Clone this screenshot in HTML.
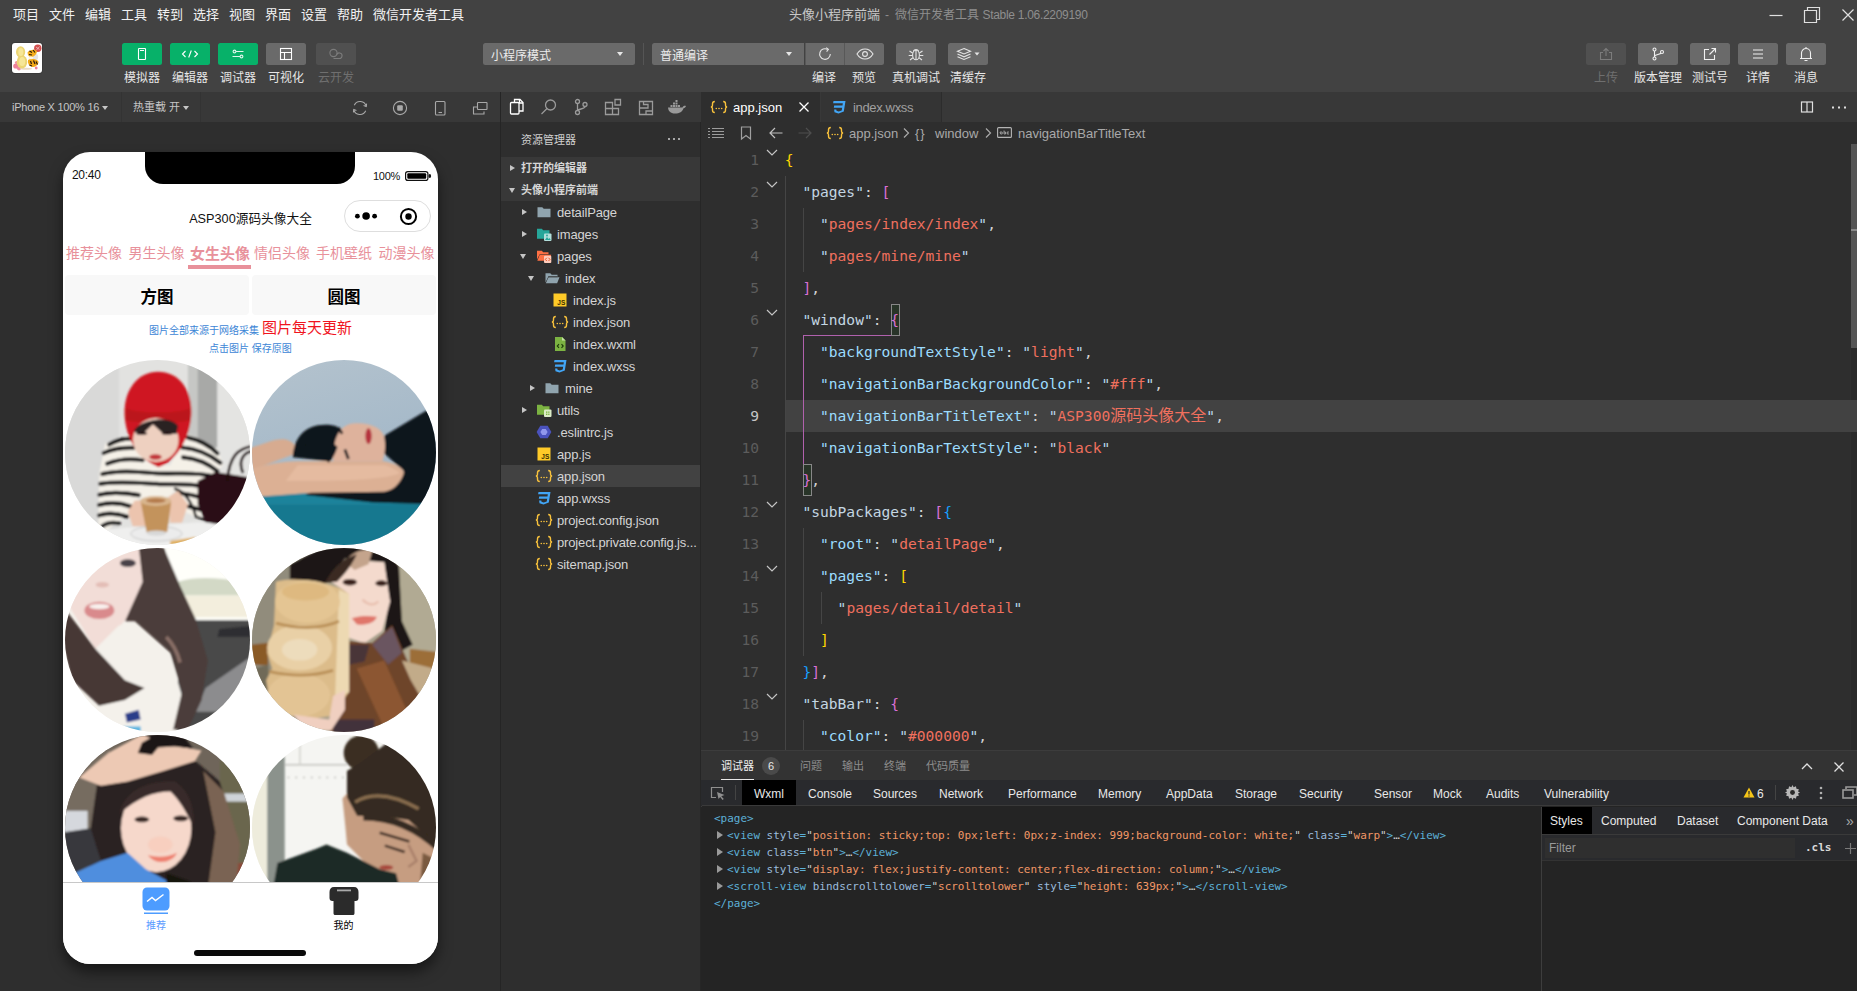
<!DOCTYPE html>
<html lang="zh-CN">
<head>
<meta charset="utf-8">
<title>微信开发者工具</title>
<style>
*{box-sizing:border-box;margin:0;padding:0}
html,body{width:1857px;height:991px;overflow:hidden;background:#2e2e2e}
body{position:relative;font-family:"Liberation Sans","Noto Sans CJK SC",sans-serif;color:#ddd;font-size:12px;-webkit-font-smoothing:antialiased}
.abs{position:absolute}
svg{display:block;overflow:visible}
/* ---------- top bars ---------- */
#menubar{left:0;top:0;width:1857px;height:30px;background:#424242}
#menubar .mi{position:absolute;top:0;height:30px;line-height:29px;font-size:13px;color:#f2f2f2;white-space:nowrap}
#title{position:absolute;left:789px;top:0;height:30px;line-height:30px;font-size:12px;color:#c8c8c8;white-space:nowrap}
#title span{color:#8e8e8e}
#toolbar{left:0;top:30px;width:1857px;height:62px;background:#424242}
.tb{position:absolute;top:13px;width:40px;height:22px;border-radius:2.5px;background:#6a6a6a}
.tb.g{background:#07b169}
.tb.d{background:#505050}
.tb svg{position:absolute;left:50%;top:50%;transform:translate(-50%,-50%)}
.tl{position:absolute;top:39px;height:18px;line-height:18px;font-size:12px;color:#e6e6e6;white-space:nowrap;transform:translateX(-50%)}
.tl.d{color:#6f6f6f}
.sel{position:absolute;top:13px;height:22px;border-radius:2.5px;background:#6a6a6a;color:#ececec;font-size:12px;line-height:26px;padding-left:8px;white-space:nowrap}
.sel i{position:absolute;right:12px;top:9px;border:3px solid transparent;border-top:4px solid #e6e6e6;border-bottom:none;width:0;height:0}
/* ---------- sub bars ---------- */
#simbar{left:0;top:92px;width:500px;height:30px;background:#383838}
#actbar{left:501px;top:92px;width:200px;height:30px;background:#383838}
#vsplit{left:500px;top:92px;width:1px;height:899px;background:#252525}
#simbg{left:0;top:122px;width:500px;height:869px;background:#2e2e2e}

#simbar .t{position:absolute;top:0;height:30px;line-height:30px;font-size:11px;color:#c6c6c6;white-space:nowrap}
#simbar .sep{position:absolute;top:0;width:1px;height:30px;background:#333}
.caret{display:inline-block;border:3px solid transparent;border-top:4px solid #c6c6c6;border-bottom:none;margin-left:3px;vertical-align:1px}
/* explorer */
#explorer{left:501px;top:122px;width:199px;height:869px;background:#2e2e2e;overflow:hidden}
#explorer .hd{position:absolute;left:20px;top:9px;font-size:11px;line-height:18px;color:#d0d0d0}
.sec{position:absolute;left:0;width:199px;height:22px;background:#383838;font-size:11px;font-weight:bold;color:#d6d6d6;line-height:22px;padding-left:20px}
.sec:before{content:"";position:absolute;left:8px;top:8px;border:3.500px solid transparent}
.sec.c:before{border-left:5px solid #c5c5c5;border-right:none;left:9px;top:7.500px}
.sec.o:before{border-top:5px solid #c5c5c5;border-bottom:none;top:9px}
.row{position:absolute;left:0;width:199px;height:22px;line-height:22px;font-size:13px;color:#d4d4d4;white-space:nowrap}
.row.selr{background:#424242}
.row .ar{position:absolute;top:7.500px;border:3.500px solid transparent}
.row .ar.c{border-left:5px solid #c5c5c5;border-right:none}
.row .ar.o{border-top:5px solid #c5c5c5;border-bottom:none;top:9px;margin-left:-2px}
.row .ic{position:absolute;top:3px;width:16px;height:16px}
.row .nm{position:absolute;top:1px;letter-spacing:-.150px}

/* editor */
#edtabs{left:702px;top:92px;width:1155px;height:30px;background:#383838}
#edgap{left:700px;top:122px;width:1px;height:869px;background:#262626}
.etab{position:absolute;top:0;height:30px;line-height:31px;font-size:13px;white-space:nowrap}
#crumbs{left:702px;top:122px;width:1155px;height:22px;background:#2e2e2e;font-size:13px;color:#a9a9a9;line-height:23.500px;white-space:nowrap}
#crumbs span{position:absolute;top:0}
#code{left:702px;top:144px;width:1155px;height:606px;background:#2e2e2e;overflow:hidden}
.ln{position:absolute;left:0;width:57px;height:32px;line-height:32px;text-align:right;font-family:"DejaVu Sans Mono","Liberation Mono",monospace;font-size:14.600px;color:#5c5c5c}
.cl{position:absolute;left:82.800px;height:32px;line-height:32px;font-family:"DejaVu Sans Mono","Liberation Mono","Noto Sans CJK SC",monospace;font-size:14.600px;color:#d4d4d4;white-space:pre;letter-spacing:.010px}
.k1{color:#c4d6e2}.k2{color:#9cdcfe}.q{color:#b9d7ea}.s{color:#f0705e}
.b1{color:#ffd700}.b2{color:#da70d6}.b3{color:#179fff}
.fold{position:absolute;left:63px;width:14px;height:8px}
.guide{position:absolute;width:1px;background:#454545}

/* debugger */
#dbg{left:702px;top:750px;width:1155px;height:241px;background:#242424}
#dbghd{position:absolute;left:0;top:0;width:1155px;height:30px;background:#333;border-top:1px solid #3c3c3c}
#dbghd .t{position:absolute;top:5px;height:20px;line-height:20px;font-size:11px;color:#8c8c8c;white-space:nowrap}
#dvtabs{position:absolute;left:0;top:30px;width:1155px;height:26px;background:#292a2d;border-bottom:1px solid #3a3a3a}
#dvtabs .t{position:absolute;top:1.500px;height:25px;line-height:25px;font-size:12px;color:#e8e8e8;white-space:nowrap}
.el{position:absolute;height:17px;line-height:17px;font-family:"DejaVu Sans Mono","Liberation Mono",monospace;font-size:10.960px;white-space:pre;color:#5db0d7}
.el .a{color:#9bbbdc}.el .v{color:#f29766}.el .p{color:#5db0d7}.el .g{color:#d0d0d0}
.el i{position:absolute;left:-10.500px;top:3.500px;border:4.200px solid transparent;border-left:6.500px solid #9a9a9a;border-right:none}
#styles{position:absolute;left:839px;top:57px;width:316px;height:184px;border-left:1px solid #3d3d3d;background:#242424}
#styles .t{position:absolute;top:1px;height:27px;line-height:27px;font-size:12px;color:#e8e8e8;white-space:nowrap}

/* phone */
#phone{left:63px;top:152px;width:375px;height:812px;background:#fff;border-radius:27px;overflow:hidden;box-shadow:0 8px 14px rgba(0,0,0,.5);color:#000}
#phone .ab{position:absolute;white-space:nowrap}
.ptab{position:absolute;top:90px;height:22px;line-height:22px;font-size:14px;color:#e8919b;white-space:nowrap}
.pbtn{position:absolute;top:123px;height:40px;background:#f8f8f8;border-radius:4px;text-align:center;line-height:44.500px;font-size:16.500px;font-weight:bold;color:#000}
.ph{position:absolute;width:184.500px;height:184.500px;border-radius:50%;overflow:hidden}
.ph svg{width:184.500px;height:184.500px}
</style>
</head>
<body>
<!-- MENUBAR -->
<div id="menubar" class="abs">
<div class="mi" style="left:13px">项目</div>
<div class="mi" style="left:49px">文件</div>
<div class="mi" style="left:85px">编辑</div>
<div class="mi" style="left:121px">工具</div>
<div class="mi" style="left:157px">转到</div>
<div class="mi" style="left:193px">选择</div>
<div class="mi" style="left:229px">视图</div>
<div class="mi" style="left:265px">界面</div>
<div class="mi" style="left:301px">设置</div>
<div class="mi" style="left:337px">帮助</div>
<div class="mi" style="left:373px">微信开发者工具</div>
<div id="title"><b style="font-weight:normal;font-size:13px">头像小程序前端</b><span style="position:absolute;left:96px">-</span><span style="position:absolute;left:106px">微信开发者工具</span><span style="position:absolute;left:193.500px;letter-spacing:-.300px">Stable 1.06.2209190</span></div>
<svg class="abs" style="left:1764px;top:0" width="93" height="30" viewBox="0 0 93 30" fill="none" stroke="#e0e0e0" stroke-width="1.2">
<path d="M5.5 15.5h13"/>
<path d="M40.5 10.5h12v12h-12z M43.5 10.5v-3h12v12h-3"/>
<path d="M78.5 9.5l11 11M89.5 9.5l-11 11"/>
</svg>
</div>
<!-- TOOLBAR -->
<div id="toolbar" class="abs">
<!-- avatar -->
<div class="abs" style="left:12px;top:13px;width:30px;height:30px;border-radius:3px;background:#fff;overflow:hidden;box-shadow:0 0 0 1px #3a3a3a">
<svg width="30" height="30" viewBox="0 0 30 30"><defs><filter id="av" x="-10%" y="-10%" width="120%" height="120%"><feGaussianBlur stdDeviation=".35"/></filter></defs><g filter="url(#av)">
<circle cx="3.800" cy="23" r="2.600" fill="#ee8098"/><circle cx="7" cy="25.300" r="2.100" fill="#f08aa0"/><circle cx="4.500" cy="19.500" r="1.600" fill="#f2909c"/><circle cx="24.200" cy="25" r="1.400" fill="#ee8098"/>
<ellipse cx="14" cy="25.800" rx="6" ry="1" fill="#ead9c4"/>
<ellipse cx="8.600" cy="9" rx="4.600" ry="5.800" fill="#ecd573"/><ellipse cx="10" cy="18.800" rx="5.300" ry="6.600" fill="#ecd573"/>
<ellipse cx="8.800" cy="9" rx="2.500" ry="4" fill="#f6e697"/><ellipse cx="10.200" cy="18.500" rx="3" ry="4.500" fill="#f6e697"/>
<circle cx="25.800" cy="5.200" r="3.700" fill="#d24f4f"/><path d="M24 4l3.500 2.500M27.500 3.500L24.500 7" stroke="#f6d0d0" stroke-width=".7"/>
<ellipse cx="23" cy="14" rx="3.200" ry="3.400" fill="#e4e4e4"/>
<path d="M15.500 9.500c2-3 7-3.500 9.500-1.500 0 3-2.500 5.500-6 6.500-2-.5-3.500-2.500-3.500-5z" fill="#f4ad1c"/>
<path d="M16 17c3-2 8-1.500 10.500 1.500 0 3.500-3 5.500-6.500 5.500-3-1-4.500-3.500-4-7z" fill="#f2a818"/>
<path d="M17.500 8l2.500 1.500M21 7l2 2.500M17 11.500l3 .5M18.500 18l1 3M21.500 17.500l1.500 3.500M24 18.500l1.500 3M17.500 22l2.500 1" stroke="#2a1a08" stroke-width="1.200"/>
<ellipse cx="18.800" cy="14.800" rx="2.500" ry="1.500" fill="#fdf5e4"/>
</g></svg></div>
<!-- left buttons -->
<div class="tb g" style="left:122px"><svg width="14" height="14" viewBox="0 0 14 14" fill="none" stroke="#fff" stroke-width="1.1"><rect x="3.5" y="1.5" width="7" height="11" rx=".6"/><path d="M5 3.5h4" stroke-width="1"/></svg></div>
<div class="tb g" style="left:170px"><svg width="18" height="12" viewBox="0 0 18 12" fill="none" stroke="#fff" stroke-width="1.1"><path d="M4.5 3L1.5 6l3 3M13.5 3l3 3-3 3M10.3 2.5L7.7 9.5"/></svg></div>
<div class="tb g" style="left:218px"><svg width="14" height="12" viewBox="0 0 14 12" fill="none" stroke="#dff7ec" stroke-width="1.1"><circle cx="3.5" cy="3.5" r="1.4"/><path d="M5 3.5h7.5M1.5 8.5h7.5"/><circle cx="10.5" cy="8.5" r="1.4"/></svg></div>
<div class="tb" style="left:266px"><svg width="14" height="14" viewBox="0 0 14 14" fill="none" stroke="#fff" stroke-width="1.1"><rect x="1.5" y="1.5" width="11" height="11"/><path d="M1.5 5.5h11M5.5 5.5v7"/></svg></div>
<div class="tb d" style="left:316px"><svg width="16" height="12" viewBox="0 0 16 12" fill="none" stroke="#7c7c7c" stroke-width="1.1"><circle cx="5.5" cy="5" r="3.6"/><path d="M8.5 7.2a2.8 2.8 0 1 1 2.3 3.3H5.5"/></svg></div>
<div class="tl" style="left:142px">模拟器</div>
<div class="tl" style="left:190px">编辑器</div>
<div class="tl" style="left:238px">调试器</div>
<div class="tl" style="left:286px">可视化</div>
<div class="tl d" style="left:336px">云开发</div>
<!-- middle -->
<div class="sel" style="left:483px;width:152px">小程序模式<i></i></div>
<div class="abs" style="left:643px;top:13px;width:1px;height:22px;background:#555"></div>
<div class="sel" style="left:652px;width:152px;border-radius:2.5px 0 0 2.5px">普通编译<i></i></div>
<div class="tb" style="left:804.5px;width:39.5px;border-radius:0;border-left:1px solid #585858"><svg width="14" height="14" viewBox="0 0 14 14" fill="none" stroke="#e4e4e4" stroke-width="1.1"><path d="M12.3 7A5.3 5.3 0 1 1 9.6 2.4"/><path d="M8.2 .6l2.2 1.8-1.8 2.3" /></svg></div>
<div class="tb" style="left:844px;width:40px;border-radius:0 2.5px 2.5px 0;border-left:1px solid #585858"><svg width="18" height="12" viewBox="0 0 18 12" fill="none" stroke="#e4e4e4" stroke-width="1.1"><path d="M1 6c2-3.3 4.8-5 8-5s6 1.700 8 5c-2 3.300-4.800 5-8 5s-6-1.700-8-5z"/><circle cx="9" cy="6" r="2.400"/></svg></div>
<div class="tb" style="left:896px"><svg width="18" height="14" viewBox="0 0 18 14" fill="none" stroke="#e4e4e4" stroke-width="1.1"><ellipse cx="9" cy="8" rx="3.4" ry="4.8"/><path d="M9 3.300v9.500M6.300 4.200A3 3 0 0 1 11.700 4.200M5.600 6L2.500 4M5.600 8.500H1.700M5.900 10.800L3 13M12.400 6l3.100-2M12.400 8.500h3.900M12.100 10.800L15 13"/></svg></div>
<div class="tb" style="left:948px"><svg width="24" height="14" viewBox="0 0 24 14" fill="none" stroke="#e4e4e4" stroke-width="1.1"><path d="M8 1.500l6.500 2.700L8 7 1.500 4.200z"/><path d="M1.500 7L8 9.800 14.500 7M1.500 9.700L8 12.500l6.500-2.800"/><path d="M18.500 5.500h5l-2.500 3z" fill="#e4e4e4" stroke="none"/></svg></div>
<div class="tl" style="left:824px">编译</div>
<div class="tl" style="left:864px">预览</div>
<div class="tl" style="left:916px">真机调试</div>
<div class="tl" style="left:968px">清缓存</div>
<!-- right -->
<div class="tb d" style="left:1586px"><svg width="14" height="14" viewBox="0 0 14 14" fill="none" stroke="#7c7c7c" stroke-width="1.1"><path d="M4 5.500H1.500v7h11v-7H10M7 9V1.500M4.500 4L7 1.500 9.500 4"/></svg></div>
<div class="tb" style="left:1638px"><svg width="14" height="14" viewBox="0 0 14 14" fill="none" stroke="#f0f0f0" stroke-width="1.1"><circle cx="3.500" cy="2.500" r="1.500"/><circle cx="3.500" cy="11.500" r="1.500"/><circle cx="11" cy="5" r="1.500"/><path d="M3.500 4v6M3.500 9.500c0-2.500 6-1.500 6.500-3.500"/></svg></div>
<div class="tb" style="left:1690px"><svg width="14" height="14" viewBox="0 0 14 14" fill="none" stroke="#f0f0f0" stroke-width="1.1"><path d="M6 2.500H1.500v10h10V8M8.500 1.500h4v4M12.500 1.500L6.500 7.500"/></svg></div>
<div class="tb" style="left:1738px"><svg width="12" height="12" viewBox="0 0 12 12" fill="none" stroke="#f0f0f0" stroke-width="1.1"><path d="M1 2h10M1 6h10M1 10h10"/></svg></div>
<div class="tb" style="left:1786px"><svg width="14" height="16" viewBox="0 0 14 16" fill="none" stroke="#f0f0f0" stroke-width="1.1"><path d="M2.500 12.500V7a4.500 4.500 0 0 1 9 0v5.500M1 12.500h12M7 1v1.500M5.500 14.500h3"/></svg></div>
<div class="tl d" style="left:1606px">上传</div>
<div class="tl" style="left:1658px">版本管理</div>
<div class="tl" style="left:1710px">测试号</div>
<div class="tl" style="left:1758px">详情</div>
<div class="tl" style="left:1806px">消息</div>
</div>
<!--SIM-->
<div id="simbar" class="abs">
<div class="t" style="left:12px;letter-spacing:-.250px">iPhone X 100% 16<span class="caret"></span></div>
<div class="sep" style="left:121px"></div>
<div class="t" style="left:133px">热重载 开<span class="caret"></span></div>
<div class="sep" style="left:200px"></div>
<svg class="abs" style="left:352px;top:7px" width="16" height="18" viewBox="0 0 16 18" fill="none" stroke="#a8a8a8" stroke-width="1.100"><path d="M2.300 6.200A6.300 6.300 0 0 1 14.200 7.400M13.700 11.800A6.300 6.300 0 0 1 1.800 10.600"/><path d="M14.600 4.600l-.4 2.900-2.600-.9M1.400 13.400l.4-2.900 2.600.9" /></svg>
<svg class="abs" style="left:392px;top:8px" width="16" height="16" viewBox="0 0 16 16" fill="none" stroke="#a8a8a8" stroke-width="1.1"><circle cx="8" cy="8" r="6.600"/><rect x="5.200" y="5.200" width="5.600" height="5.600" rx="1" fill="#a8a8a8" stroke="none"/></svg>
<svg class="abs" style="left:432px;top:8px" width="16" height="16" viewBox="0 0 16 16" fill="none" stroke="#a8a8a8" stroke-width="1.1"><rect x="3.500" y="1.500" width="9.500" height="13.500" rx="1"/><path d="M6.500 12.500h3.500"/></svg>
<svg class="abs" style="left:472px;top:8px" width="16" height="16" viewBox="0 0 16 16" fill="none" stroke="#a8a8a8" stroke-width="1.100"><rect x="5.500" y="2.500" width="9.500" height="7" rx=".6"/><path d="M5.500 7h-4v7h10.500v-2.500" /></svg>
</div>
<div id="simbg" class="abs"></div>
<div id="actbar" class="abs">
<svg class="abs" style="left:7px;top:6px" width="18" height="18" viewBox="0 0 18 18" fill="none" stroke="#fff" stroke-width="1.300"><path d="M6.500 4.500v-3h5.500l3 3v8.500h-4"/><path d="M11.500 1.500v3.500h3.500"/><rect x="2.500" y="4.500" width="8.500" height="11.500" rx="1"/></svg>
<svg class="abs" style="left:39px;top:6px" width="18" height="18" viewBox="0 0 18 18" fill="none" stroke="#9a9a9a" stroke-width="1.300"><circle cx="10.500" cy="7" r="5"/><path d="M7 10.500L1.500 16"/></svg>
<svg class="abs" style="left:71px;top:6px" width="18" height="18" viewBox="0 0 18 18" fill="none" stroke="#9a9a9a" stroke-width="1.300"><circle cx="5.500" cy="3.500" r="2"/><circle cx="5.500" cy="14.500" r="2"/><circle cx="13" cy="6.500" r="2"/><path d="M5.500 5.500v7M13 8.500c0 3-7.500 2-7.500 4.500"/></svg>
<svg class="abs" style="left:103px;top:6px" width="18" height="18" viewBox="0 0 18 18" fill="none" stroke="#9a9a9a" stroke-width="1.300"><path d="M1.500 4.500h7v12h-7zM1.500 10.500h13v6h-6v-12M11 1.500h5.500v5.500H11z"/></svg>
<svg class="abs" style="left:136px;top:6px" width="18" height="18" viewBox="0 0 18 18" fill="none" stroke="#9a9a9a" stroke-width="1.300"><path d="M2.500 3.500h13v13h-13zM2.500 10h8.500v-3.500H6.500v-3M9 16.500v-3.500h6.500"/></svg>
<svg class="abs" style="left:166px;top:6px" width="20" height="18" viewBox="0 0 20 18"><path d="M1 9.500h14.500c.5-1.500 2-2 3.500-1.500-.3 1.300-1.300 2-2.500 2.200C15.500 13.500 12.500 15.500 8 15.500 3.500 15.500 1.300 13 1 9.500z" fill="#9a9a9a"/><path d="M3.500 7h2v2h-2zM6 7h2v2h-2zM8.500 7h2v2h-2zM6 4.500h2v2h-2zM8.500 4.500h2v2h-2zM11 7h2v2h-2zM8.500 2h2v2h-2z" fill="#9a9a9a"/></svg>
</div>
<div id="vsplit" class="abs"></div>
<div id="phone" class="abs">
<div class="ab" style="left:9px;top:15px;font-size:12px;line-height:16px;color:#111;letter-spacing:-.300px">20:40</div>
<div class="abs" style="left:82px;top:0;width:210px;height:32px;background:#000;border-radius:0 0 18px 18px"></div>
<div class="ab" style="left:310px;top:16px;font-size:11px;line-height:16px;color:#111;letter-spacing:-.300px">100%</div>
<svg class="abs" style="left:342px;top:19px" width="27" height="10" viewBox="0 0 27 10"><rect x=".6" y=".6" width="22.300" height="8.800" rx="2.200" fill="none" stroke="#111" stroke-width="1.200"/><rect x="2.300" y="2.300" width="18.900" height="5.400" rx="1" fill="#000"/><ellipse cx="24.800" cy="5" rx="1.300" ry="1.900" fill="#111"/></svg>
<div class="ab" style="left:0;width:375px;top:57px;text-align:center;font-size:12.700px;line-height:20px;color:#111">ASP300源码头像大全</div>
<div class="abs" style="left:281px;top:48px;width:87px;height:32px;border:1px solid #dedede;border-radius:16px;background:#fff"></div>
<svg class="abs" style="left:292px;top:59px" width="24" height="10" viewBox="0 0 24 10" fill="#000"><circle cx="2.400" cy="5.200" r="2.400"/><circle cx="11.100" cy="5" r="3.800"/><circle cx="19.600" cy="5.200" r="2.400"/></svg>
<svg class="abs" style="left:337px;top:56px" width="17" height="17" viewBox="0 0 17 17"><circle cx="8.500" cy="8.500" r="7.600" fill="none" stroke="#000" stroke-width="2"/><circle cx="8.500" cy="8.500" r="3.200" fill="#000"/></svg>
<div class="ptab" style="left:3px">推荐头像</div>
<div class="ptab" style="left:65.5px">男生头像</div>
<div class="ptab" style="left:191px">情侣头像</div>
<div class="ptab" style="left:253px">手机壁纸</div>
<div class="ptab" style="left:315.5px">动漫头像</div>
<div class="ptab" style="left:127px;font-size:15px;font-weight:bold;top:90.500px">女生头像</div>
<div class="abs" style="left:125px;top:113px;width:63px;height:4px;background:#e8919b"></div>

<div class="pbtn" style="left:2px;width:184px">方图</div>
<div class="pbtn" style="left:189px;width:184px">圆图</div>
<div class="ab" style="left:86px;top:171.500px;font-size:10px;line-height:14px;color:#3d86d6">图片全部来源于网络采集</div>
<div class="ab" style="left:199px;top:166px;font-size:15px;line-height:20px;color:#f0141e">图片每天更新</div>
<div class="ab" style="left:146px;top:190px;font-size:10px;line-height:14px;color:#3d86d6">点击图片 保存原图</div>
<div class="ph" style="left:2px;top:208px"><svg viewBox="25.4 25.4 937.6 937.6"><defs><filter id="bl1" x="-5%" y="-5%" width="110%" height="110%"><feGaussianBlur stdDeviation="5"/></filter></defs><rect x="-24.6" y="-24.6" width="1037.6" height="1037.6" fill="#e2e2e0"/><g filter="url(#bl1)"><rect x="-30" y="-30" width="330" height="1050" fill="#d9d9d8"/><rect x="650" y="-30" width="60" height="500" fill="#c6c7c5"/><rect x="700" y="-30" width="100" height="500" fill="#a8a9a7"/><rect x="800" y="-30" width="220" height="700" fill="#e4e4e2"/><path d="M25 1000V900L240 885 700 850 1000 870v130z" fill="#efefee"/><path d="M195 890L200 600 230 450 340 410 420 420 470 560H560L640 400 700 420 800 480 830 560 760 620 700 700 720 835 640 800 580 690 560 720 400 730 350 800 240 890z" fill="#f5f1e8"/><g stroke="#151213" stroke-width="21" fill="none" stroke-linecap="round"><path d="M250 455C290 430 330 425 360 425M650 420C700 430 760 460 800 500"/><path d="M222 498C270 475 320 470 372 472M620 470C690 475 760 505 815 548"/><path d="M240 552C300 528 360 525 420 535M625 520C690 525 750 550 800 590"/><path d="M215 605C290 585 380 590 470 600S680 590 770 615"/><path d="M205 655C290 640 400 650 490 655S660 650 720 668"/><path d="M200 710C260 695 330 700 400 712M600 700C640 706 680 712 700 720"/><path d="M198 762C250 748 310 752 360 770M655 770C675 775 695 780 712 786"/><path d="M198 815C240 800 290 805 340 820"/><path d="M215 870C240 850 270 850 300 855"/><path d="M585 680C650 700 680 780 690 820L735 838" stroke-width="13"/></g><path d="M700 640L790 595 950 620 990 640V800L870 870 740 850 700 760z" fill="#2a1012"/><path d="M850 640C860 520 900 470 990 462M930 600C900 530 940 485 990 488" stroke="#1f0c0e" stroke-width="14" fill="none"/><path d="M498 85C400 85 328 170 328 290c0 110 52 230 172 280 100-30 168-170 168-280C668 170 600 85 498 85z" fill="#cf1820"/><path d="M335 270C400 300 600 300 662 270v60C600 350 400 350 333 330z" fill="#bb141c"/><ellipse cx="487" cy="432" rx="116" ry="112" fill="#eed0c0"/><path d="M375 390C390 330 560 300 600 360l-8 42-70-4-50-46-52 50z" fill="#2a2021"/><ellipse cx="415" cy="398" rx="28" ry="8" fill="#2b1c1c"/><ellipse cx="545" cy="398" rx="28" ry="8" fill="#2b1c1c"/><ellipse cx="485" cy="518" rx="32" ry="14" fill="#c2353a"/><path d="M345 795L380 740h50l15 130h-75z" fill="#ecc4ae"/><path d="M550 722L600 690l50 70-30 92h-60z" fill="#ecc4ae"/><ellipse cx="490" cy="908" rx="130" ry="38" fill="#ececec" stroke="#c6c6c6" stroke-width="5"/><path d="M410 745H565L545 900H440z" fill="#c3935c"/><ellipse cx="487" cy="742" rx="78" ry="25" fill="#d9b68e"/><ellipse cx="487" cy="740" rx="50" ry="12" fill="#b47a4c"/><ellipse cx="490" cy="905" rx="52" ry="13" fill="#d8d8d8"/><path d="M560 945L690 925v50H560z" fill="#e0b060"/></g></svg></div>
<div class="ph" style="left:188.5px;top:208px"><svg viewBox="28 25.4 937.6 937.6"><defs><filter id="bl2" x="-5%" y="-5%" width="110%" height="110%"><feGaussianBlur stdDeviation="5"/></filter><linearGradient id="sky2" x1="0" y1="0" x2=".3" y2="1"><stop offset="0" stop-color="#b6c4ce"/><stop offset=".7" stop-color="#a2b7c8"/></linearGradient></defs><rect x="-30" y="-30" width="1100" height="1100" fill="url(#sky2)"/><g filter="url(#bl2)"><rect x="-20" y="680" width="1050" height="120" fill="#1d839b"/><rect x="-20" y="760" width="1050" height="300" fill="#19788f"/><path d="M-20 700L300 700 640 750 1010 760v-70z" fill="#1d839b"/><path d="M700 410L910 285 1010 270V760L640 750 300 712 330 690H700L800 590 700 500z" fill="#0e141b"/><path d="M-10 480C80 460 140 420 200 430c40 10 60 40 50 70L-10 600z" fill="#d7ab90"/><path d="M-10 590C80 560 180 540 260 540H700C760 550 800 580 800 600 780 660 740 690 700 695L330 700 60 720-10 700z" fill="#dcb094"/><path d="M260 560H700C740 570 770 590 780 600 700 640 400 640 200 640z" fill="#e5bba0"/><path d="M235 520C240 420 300 355 400 355c50 0 80 10 75 40-20 60-40 100-60 145z" fill="#10141a"/><path d="M440 540C440 440 460 360 540 348c80-8 150 20 160 70 10 50 0 100-10 122z" fill="#deb29c"/><path d="M300 470C360 430 420 440 450 470c-10 30-20 50-40 70" stroke="#10141a" stroke-width="22" fill="none"/><ellipse cx="620" cy="412" rx="16" ry="40" fill="#b5303c"/><path d="M468 370l18 30M500 480l18 48" stroke="#15151a" stroke-width="14"/></g></svg></div>
<div class="ph" style="left:2px;top:395.5px"><svg viewBox="25.4 28 937.6 937.6"><defs><filter id="bl3" x="-5%" y="-5%" width="110%" height="110%"><feGaussianBlur stdDeviation="6"/></filter></defs><rect x="-24.6" y="-22" width="1037.6" height="1037.6" fill="#f4f1eb"/><g filter="url(#bl3)"><rect x="540" y="-20" width="480" height="420" fill="#fffffa"/><path d="M600 200C700 170 800 180 930 200v70H600z" fill="#d3d9c6"/><path d="M610 270H1000v110H640z" fill="#f3eedd"/><path d="M640 395H1000V1000H560z" fill="#48484a"/><path d="M810 440l190-20v60H800z" fill="#2e2e31"/><path d="M1000 560L740 740 690 860H800L1000 690z" fill="#8c8c8e"/><path d="M130 140L410 20 440 150 390 330 300 430 180 540 50 330 80 200z" fill="#f2ddd7"/><path d="M180 540L300 420l80 10L560 580l60 200-30 200H300L200 830l130-30 100-60-100-40z" fill="#f4f1eb"/><path d="M400 20H525L610 220 690 390 752 600 720 800 650 950H575L620 760 560 560 380 400H330L420 200z" fill="#4c3e3b"/><path d="M540 480c40 40 60 90 70 130" stroke="#8a7068" stroke-width="18" fill="none"/><path d="M20 330L180 540 330 700 430 740 330 800 200 830 60 700 10 500z" fill="#463936"/><ellipse cx="200" cy="345" rx="76" ry="44" fill="#d98a8c"/><ellipse cx="200" cy="325" rx="52" ry="14" fill="#f8efec"/><ellipse cx="215" cy="215" rx="34" ry="14" fill="#e3bdb6"/><ellipse cx="345" cy="105" rx="40" ry="20" fill="#4a4248"/><path d="M330 870l70-20 10 50-70 15z" fill="#2c3e8a"/><path d="M320 935h90v40h-90z" fill="#5ab4e0"/></g></svg></div>
<div class="ph" style="left:188.5px;top:395.5px"><svg viewBox="28 28 937.6 937.6"><defs><filter id="bl4" x="-5%" y="-5%" width="110%" height="110%"><feGaussianBlur stdDeviation="6"/></filter></defs><rect x="-22" y="-22" width="1037.6" height="1037.6" fill="#a49d89"/><g filter="url(#bl4)"><rect x="-20" y="-20" width="300" height="1050" fill="#918c7c"/><rect x="760" y="-20" width="260" height="700" fill="#b1aa93"/><path d="M20 520L110 510V625L20 620z" fill="#8a5a28"/><path d="M830 540L1000 560V660L830 630z" fill="#9c6e38"/><path d="M40 640L110 620 120 760 70 740z" fill="#6f6a58"/><path d="M220 110L400 20H700L775 120 790 400 845 520 760 565 700 480 720 300 700 100 500 80 400 210 220 185z" fill="#1e1715"/><path d="M430 200L520 90 700 100 730 300 690 450 600 512 510 482 505 250z" fill="#f4dacd"/><path d="M500 100C540 40 600 30 640 40l-20 70-70 30z" fill="#c4a48c"/><path d="M400 205C440 120 500 80 560 60c-20 50-60 100-100 140z" fill="#3a2a22"/><ellipse cx="525" cy="202" rx="36" ry="17" fill="#3a241c"/><ellipse cx="685" cy="207" rx="30" ry="15" fill="#3a241c"/><path d="M535 385C580 372 620 372 662 378 655 410 600 425 560 415z" fill="#e0766a"/><path d="M590 290c30 30 60 30 80 10" stroke="#e8bfae" stroke-width="12" fill="none"/><path d="M505 500L640 512 740 420 800 560 905 800 700 960H420L500 700z" fill="#6e442c"/><path d="M505 520H625L600 605 505 625z" fill="#4a3638"/><path d="M440 900H650v70H440z" fill="#43303a"/><path d="M560 640L700 600 835 900 700 945z" fill="#8c5630"/><path d="M640 520L740 430 790 560 720 620z" fill="#6a5560"/><path d="M790 600L950 640 900 810 835 700z" fill="#c2ab89"/><path d="M150 200C250 170 400 200 480 235L520 260V760L440 880 300 900 120 820 100 700 130 640 105 560 140 420z" fill="#dcbc8a"/><path d="M470 240L522 262V760L450 800z" fill="#edd9b2"/><ellipse cx="310" cy="300" rx="165" ry="108" fill="#e4c593"/><ellipse cx="270" cy="535" rx="165" ry="115" fill="#e9d0a6"/><ellipse cx="265" cy="775" rx="160" ry="110" fill="#e3c494"/><ellipse cx="300" cy="250" rx="120" ry="45" fill="#dcb478" opacity=".7"/><ellipse cx="270" cy="545" rx="90" ry="55" fill="#f0e4cc" opacity=".6"/><path d="M150 410C250 440 380 440 470 400M115 655C220 680 340 680 440 650" stroke="#b98f56" stroke-width="14" fill="none"/><path d="M240 875L420 900 440 780 500 750V850L430 955H300z" fill="#f0cfc0"/></g></svg></div>
<div class="ph" style="left:2px;top:583px"><svg viewBox="24.4 24.4 901.7 901.7"><defs><filter id="bl5" x="-5%" y="-5%" width="110%" height="110%"><feGaussianBlur stdDeviation="6"/></filter></defs><rect x="-25.6" y="-25.6" width="1001.7" height="1001.7" fill="#6f655a"/><g filter="url(#bl5)"><rect x="-20" y="-20" width="260" height="1000" fill="#766c60"/><rect x="15" y="395" width="120" height="105" fill="#d5d8dd"/><rect x="780" y="150" width="200" height="800" fill="#6a664e"/><path d="M790 310h150v40H790z" fill="#cfd3d8"/><path d="M820 650H960V900H820z" fill="#8c4838"/><path d="M150 480L180 270 330 250 500 200 660 150 780 250 860 500 850 940H200L140 640z" fill="#2c2321"/><path d="M360 100L420 20H600L650 95 480 80 450 125z" fill="#1d1717"/><path d="M700 200L800 300 880 560 845 940H700L760 500z" fill="#7a6452"/><ellipse cx="470" cy="480" rx="172" ry="215" fill="#f6d8cb"/><path d="M290 410C320 290 420 250 560 250 640 300 660 400 650 470 620 400 580 340 540 300 460 300 380 330 290 410z" fill="#382b29"/><path d="M300 560C330 640 380 700 440 740L400 800 300 660z" fill="#2c2321"/><ellipse cx="400" cy="437" rx="36" ry="14" fill="#3a2a28"/><ellipse cx="590" cy="432" rx="36" ry="14" fill="#3a2a28"/><ellipse cx="490" cy="560" rx="60" ry="40" fill="#f9c6b4" opacity=".5"/><path d="M430 612C480 625 530 620 572 600 550 650 470 665 430 612z" fill="#ee8070"/><path d="M95 232L240 110 400 22 520 70 692 100 660 152 500 202 330 252 200 272z" fill="#edc9b4"/><path d="M400 62L470 22 610 40 652 92 560 80 480 86 450 122 380 112z" fill="#1d1717"/><path d="M20 500L150 480 200 640 60 705 0 720z" fill="#37383c"/><path d="M60 705L200 640 330 600 420 680 565 760V950H60z" fill="#4f8ede"/><path d="M520 700L640 740 620 950H520z" fill="#16120f"/></g></svg></div>
<div class="ph" style="left:188.5px;top:583px"><svg viewBox="935.9 24.4 901.7 901.7"><defs><filter id="bl6" x="-5%" y="-5%" width="110%" height="110%"><feGaussianBlur stdDeviation="5"/></filter></defs><rect x="885.9" y="-25.6" width="1001.7" height="1001.7" fill="#f5f5f2"/><g filter="url(#bl6)"><rect x="900" y="-20" width="110" height="1000" fill="#eeecdc"/><rect x="1010" y="130" width="86" height="850" fill="#8b928c"/><path d="M1096 170H1400" stroke="#c2c2bd" stroke-width="7"/><path d="M1170 50V170" stroke="#d0d0cb" stroke-width="7"/><path d="M1110 232H1400" stroke="#b9b9b4" stroke-width="7" stroke-dasharray="8 30"/><path d="M1378 335L1420 290 1500 300 1700 350 1850 450V960H1500L1480 640 1400 560 1392 470z" fill="#c69d81"/><circle cx="1470" cy="112" r="86" fill="#3b2e22"/><path d="M1400 200L1480 150 1600 60 1760 130 1850 300V570L1700 440 1560 420H1450L1400 330z" fill="#352a20"/><path d="M1440 352C1500 315 1600 300 1750 385" stroke="#8a6e50" stroke-width="16" fill="none"/><path d="M1480 425C1560 425 1700 440 1850 580" stroke="#352a20" stroke-width="34" fill="none"/><path d="M1560 502L1705 545M1585 565L1682 596" stroke="#3a2a22" stroke-width="12"/><path d="M1700 560l40 80-40 30" stroke="#a9806a" stroke-width="12" fill="none"/><ellipse cx="1592" cy="672" rx="34" ry="12" fill="#a8483e"/><path d="M1770 600L1850 640V960H1740z" fill="#7a5a40"/><path d="M1005 960L1060 650 1250 580 1300 560 1400 600 1560 680 1640 700 1710 960z" fill="#1f2a27"/></g></svg></div>
<div class="abs" style="left:0;top:730px;width:375px;height:82px;background:#fff;border-top:1px solid #c8c8c8"></div>
<svg class="abs" style="left:79px;top:735px" width="28" height="28" viewBox="0 0 28 28"><rect x=".5" y=".5" width="27" height="23" rx="4.500" fill="#4d9cff"/><path d="M5 14.500l5-4 3.500 3 8-6" fill="none" stroke="#fff" stroke-width="1.500"/><rect x="2" y="25.500" width="24" height="1.500" fill="#4d9cff"/></svg>
<div class="ab" style="left:83px;top:766.500px;font-size:10px;line-height:14px;color:#5b9bff">推荐</div>
<svg class="abs" style="left:266px;top:735px" width="30" height="28" viewBox="0 0 30 28"><path d="M5 0h20c3 0 4.500 2 4.500 5v6c0 2-1 3-3 3h-1v12c0 1.500-.5 2-2 2H6.500c-1.500 0-2-.5-2-2V14h-1c-2 0-3-1-3-3V5C.5 2 2 0 5 0z" fill="#2b2b2b"/><rect x="8" y="2.500" width="14" height="1.800" fill="#aaa"/></svg>
<div class="ab" style="left:270.500px;top:766.500px;font-size:10px;line-height:14px;color:#000">我的</div>
<div class="abs" style="left:131px;top:798px;width:112px;height:5.500px;border-radius:3px;background:#0a0a0a"></div>
</div>
<div id="explorer" class="abs">
<div class="hd">资源管理器</div>
<svg class="abs" style="left:166px;top:15px" width="14" height="4" viewBox="0 0 14 4" fill="#d0d0d0"><circle cx="2" cy="2" r="1"/><circle cx="7" cy="2" r="1"/><circle cx="12" cy="2" r="1"/></svg>
<div class="sec c" style="top:35px">打开的编辑器</div>
<div class="sec o" style="top:57px">头像小程序前端</div>
<div class="row" style="top:79px"><i class="ar c" style="left:21px"></i><svg class="ic" style="left:35px" viewBox="0 0 16 16"><path d="M1.500 3.200h4.800l1.400 1.500h6.800v8.600h-13z" fill="#90a4ae"/></svg><span class="nm" style="left:56px">detailPage</span></div>
<div class="row" style="top:101px"><i class="ar c" style="left:21px"></i><svg class="ic" style="left:35px" viewBox="0 0 16 16"><path d="M1 2.700h4.800l1.400 1.500h6.300v8.600H1z" fill="#26a69a"/><rect x="8" y="7.500" width="7.500" height="7.500" rx="1" fill="#b2dfdb"/><path d="M9 14l2-3 1.500 2 1-1 1.200 2z" fill="#26a69a"/><circle cx="11" cy="9.500" r=".9" fill="#26a69a"/></svg><span class="nm" style="left:56px">images</span></div>
<div class="row" style="top:123px"><i class="ar o" style="left:21px"></i><svg class="ic" style="left:35px" viewBox="0 0 16 16"><path d="M1 2.700h4.800l1.400 1.500h5.300v2H3.700L1 11.500z" fill="#ff7043"/><path d="M3.800 6.700h11.500l-2.400 6.100H1.300z" fill="#ff7043"/><rect x="8" y="7.800" width="7.300" height="7.200" rx="1" fill="#ffccbc"/><path d="M10.800 9.800l-1.500 1.600 1.500 1.600M12.500 9.800l1.500 1.600-1.500 1.600" stroke="#e64a19" stroke-width=".9" fill="none"/></svg><span class="nm" style="left:56px">pages</span></div>
<div class="row" style="top:145px"><i class="ar o" style="left:29px"></i><svg class="ic" style="left:43px" viewBox="0 0 16 16"><path d="M1.500 3.200h4.800l1.400 1.500h5.800v2H4.200L1.500 12.500z" fill="#90a4ae"/><path d="M4.500 7.200h11l-2.400 6.100H1.800z" fill="#90a4ae"/><path d="M4.200 6.700h9.300" stroke="#2e2e2e" stroke-width=".8"/></svg><span class="nm" style="left:64px">index</span></div>
<div class="row" style="top:167px"><svg class="ic" style="left:51px" viewBox="0 0 16 16"><rect x="1.500" y="1.500" width="13" height="13" fill="#ffca28"/><text x="13.300" y="13" font-family="Liberation Sans,sans-serif" font-weight="bold" font-size="6.500" text-anchor="end" fill="#3a3000">JS</text></svg><span class="nm" style="left:72px">index.js</span></div>
<div class="row" style="top:189px"><svg class="ic" style="left:51px;width:18px;margin-left:-1px" viewBox="0 0 18 16"><path d="M4.800 2.500c-2 0-2.300.8-2.300 2.200v1.500c0 1-.5 1.600-1.500 1.800 1 .2 1.500.8 1.500 1.800v1.500c0 1.400.3 2.200 2.300 2.200M13.200 2.500c2 0 2.300.8 2.300 2.200v1.500c0 1 .5 1.600 1.500 1.800-1 .2-1.500.8-1.500 1.800v1.500c0 1.400-.3 2.200-2.300 2.200" fill="none" stroke="#f9c23c" stroke-width="1.400"/><circle cx="6.300" cy="9.500" r=".8" fill="#f9c23c"/><circle cx="9" cy="9.500" r=".8" fill="#f9c23c"/><circle cx="11.700" cy="9.500" r=".8" fill="#f9c23c"/></svg><span class="nm" style="left:72px">index.json</span></div>
<div class="row" style="top:211px"><svg class="ic" style="left:51px" viewBox="0 0 16 16"><path d="M3 1h7l3.500 3.500V15H3z" fill="#7cb342"/><path d="M10 1v3.500h3.500z" fill="#c5e1a5"/><path d="M7 8.200L5.300 10 7 11.800M9.500 8.200l1.700 1.800-1.700 1.800" stroke="#1b3a08" stroke-width="1.100" fill="none"/></svg><span class="nm" style="left:72px">index.wxml</span></div>
<div class="row" style="top:233px"><svg class="ic" style="left:51px" viewBox="0 0 16 16"><path d="M2.500 2h12l-1.700 10.500L7.500 14.500l-4-1.300-.4-2.700h2.200l.2 1.200 2.200.7 3-.9.500-2.800H2.800l.4-2.200h8.300l.3-2.200H2.100z" fill="#42a5f5"/></svg><span class="nm" style="left:72px">index.wxss</span></div>
<div class="row" style="top:255px"><i class="ar c" style="left:29px"></i><svg class="ic" style="left:43px" viewBox="0 0 16 16"><path d="M1.500 3.200h4.800l1.400 1.500h6.800v8.600h-13z" fill="#90a4ae"/></svg><span class="nm" style="left:64px">mine</span></div>
<div class="row" style="top:277px"><i class="ar c" style="left:21px"></i><svg class="ic" style="left:35px" viewBox="0 0 16 16"><path d="M1 2.700h4.800l1.400 1.500h6.300v8.600H1z" fill="#7cb342"/><rect x="8" y="7.500" width="7.500" height="7.500" rx="1" fill="#dcedc8"/><path d="M10 9.500h3.500v3.500H10z" fill="#7cb342"/><path d="M11.750 8.500v5.500M9 11.250h5.500" stroke="#dcedc8" stroke-width=".8"/></svg><span class="nm" style="left:56px">utils</span></div>
<div class="row" style="top:299px"><svg class="ic" style="left:35px" viewBox="0 0 16 16"><path d="M4.300 1.800h7.400L15.400 8l-3.700 6.200H4.300L.6 8z" fill="#4a52bd"/><path d="M6.200 4.900h3.600L11.600 8l-1.800 3.100H6.200L4.400 8z" fill="#9198ec"/></svg><span class="nm" style="left:56px">.eslintrc.js</span></div>
<div class="row" style="top:321px"><svg class="ic" style="left:35px" viewBox="0 0 16 16"><rect x="1.500" y="1.500" width="13" height="13" fill="#ffca28"/><text x="13.300" y="13" font-family="Liberation Sans,sans-serif" font-weight="bold" font-size="6.500" text-anchor="end" fill="#3a3000">JS</text></svg><span class="nm" style="left:56px">app.js</span></div>
<div class="row selr" style="top:343px"><svg class="ic" style="left:35px;width:18px;margin-left:-1px" viewBox="0 0 18 16"><path d="M4.800 2.500c-2 0-2.300.8-2.300 2.200v1.500c0 1-.5 1.600-1.500 1.800 1 .2 1.500.8 1.500 1.800v1.500c0 1.400.3 2.200 2.300 2.200M13.200 2.500c2 0 2.300.8 2.300 2.200v1.500c0 1 .5 1.600 1.500 1.800-1 .2-1.500.8-1.500 1.800v1.500c0 1.400-.3 2.200-2.300 2.200" fill="none" stroke="#f9c23c" stroke-width="1.400"/><circle cx="6.300" cy="9.500" r=".8" fill="#f9c23c"/><circle cx="9" cy="9.500" r=".8" fill="#f9c23c"/><circle cx="11.700" cy="9.500" r=".8" fill="#f9c23c"/></svg><span class="nm" style="left:56px">app.json</span></div>
<div class="row" style="top:365px"><svg class="ic" style="left:35px" viewBox="0 0 16 16"><path d="M2.500 2h12l-1.700 10.500L7.500 14.500l-4-1.300-.4-2.700h2.200l.2 1.200 2.200.7 3-.9.500-2.800H2.800l.4-2.200h8.300l.3-2.200H2.100z" fill="#42a5f5"/></svg><span class="nm" style="left:56px">app.wxss</span></div>
<div class="row" style="top:387px"><svg class="ic" style="left:35px;width:18px;margin-left:-1px" viewBox="0 0 18 16"><path d="M4.800 2.500c-2 0-2.300.8-2.300 2.200v1.500c0 1-.5 1.600-1.500 1.800 1 .2 1.500.8 1.500 1.800v1.500c0 1.400.3 2.200 2.300 2.200M13.200 2.500c2 0 2.300.8 2.300 2.200v1.500c0 1 .5 1.600 1.500 1.800-1 .2-1.500.8-1.500 1.800v1.500c0 1.400-.3 2.200-2.300 2.200" fill="none" stroke="#f9c23c" stroke-width="1.400"/><circle cx="6.300" cy="9.500" r=".8" fill="#f9c23c"/><circle cx="9" cy="9.500" r=".8" fill="#f9c23c"/><circle cx="11.700" cy="9.500" r=".8" fill="#f9c23c"/></svg><span class="nm" style="left:56px">project.config.json</span></div>
<div class="row" style="top:409px"><svg class="ic" style="left:35px;width:18px;margin-left:-1px" viewBox="0 0 18 16"><path d="M4.800 2.500c-2 0-2.300.8-2.300 2.200v1.500c0 1-.5 1.600-1.500 1.800 1 .2 1.500.8 1.500 1.800v1.500c0 1.400.3 2.200 2.300 2.200M13.200 2.500c2 0 2.300.8 2.300 2.200v1.500c0 1 .5 1.600 1.500 1.800-1 .2-1.500.8-1.500 1.800v1.500c0 1.400-.3 2.200-2.300 2.200" fill="none" stroke="#f9c23c" stroke-width="1.400"/><circle cx="6.300" cy="9.500" r=".8" fill="#f9c23c"/><circle cx="9" cy="9.500" r=".8" fill="#f9c23c"/><circle cx="11.700" cy="9.500" r=".8" fill="#f9c23c"/></svg><span class="nm" style="left:56px">project.private.config.js...</span></div>
<div class="row" style="top:431px"><svg class="ic" style="left:35px;width:18px;margin-left:-1px" viewBox="0 0 18 16"><path d="M4.800 2.500c-2 0-2.300.8-2.300 2.200v1.500c0 1-.5 1.600-1.500 1.800 1 .2 1.500.8 1.500 1.800v1.500c0 1.400.3 2.200 2.300 2.200M13.200 2.500c2 0 2.300.8 2.300 2.200v1.500c0 1 .5 1.600 1.500 1.800-1 .2-1.500.8-1.500 1.800v1.500c0 1.400-.3 2.200-2.300 2.200" fill="none" stroke="#f9c23c" stroke-width="1.400"/><circle cx="6.300" cy="9.500" r=".8" fill="#f9c23c"/><circle cx="9" cy="9.500" r=".8" fill="#f9c23c"/><circle cx="11.700" cy="9.500" r=".8" fill="#f9c23c"/></svg><span class="nm" style="left:56px">sitemap.json</span></div>
</div>
<div id="edgap" class="abs"></div>
<div id="edtabs" class="abs">
<div class="etab" style="left:0;width:118px;background:#2e2e2e"></div>
<div class="etab" style="left:119px;width:121px;background:#343434;border-right:1px solid #2c2c2c"></div>
<svg class="abs" style="left:8px;top:7px" width="18" height="16" viewBox="0 0 18 16"><path d="M4.800 2.500c-2 0-2.300.8-2.300 2.200v1.500c0 1-.5 1.600-1.500 1.800 1 .2 1.500.8 1.500 1.800v1.500c0 1.400.3 2.200 2.300 2.200M13.200 2.500c2 0 2.300.8 2.300 2.200v1.500c0 1 .5 1.600 1.500 1.800-1 .2-1.500.8-1.500 1.800v1.500c0 1.400-.3 2.200-2.300 2.200" fill="none" stroke="#f9c23c" stroke-width="1.400"/><circle cx="6.300" cy="9.500" r=".8" fill="#f9c23c"/><circle cx="9" cy="9.500" r=".8" fill="#f9c23c"/><circle cx="11.700" cy="9.500" r=".8" fill="#f9c23c"/></svg>
<div class="etab" style="left:31px;color:#fff">app.json</div>
<svg class="abs" style="left:97px;top:10px" width="10" height="10" viewBox="0 0 10 10" stroke="#fff" stroke-width="1.300"><path d="M.5.5l9 9M9.500.5l-9 9"/></svg>
<svg class="abs" style="left:129px;top:7px" width="16" height="16" viewBox="0 0 16 16"><path d="M2.500 2h12l-1.700 10.500L7.500 14.500l-4-1.300-.4-2.700h2.200l.2 1.200 2.200.7 3-.9.5-2.800H2.800l.4-2.200h8.300l.3-2.200H2.100z" fill="#42a5f5"/></svg>
<div class="etab" style="left:151px;color:#a0a0a0;letter-spacing:-.350px">index.wxss</div>
<svg class="abs" style="left:1098px;top:8px" width="14" height="14" viewBox="0 0 14 14" fill="none" stroke="#e0e0e0" stroke-width="1.200"><rect x="1.500" y="2" width="11" height="10"/><path d="M7 2v10"/></svg>
<svg class="abs" style="left:1130px;top:14px" width="14" height="3" viewBox="0 0 14 3" fill="#e0e0e0"><rect x="0" y=".5" width="2" height="2"/><rect x="6" y=".5" width="2" height="2"/><rect x="12" y=".5" width="2" height="2"/></svg>
</div>
<div id="crumbs" class="abs">
<svg class="abs" style="left:6px;top:5px" width="16" height="12" viewBox="0 0 16 12" stroke="#9c9c9c" stroke-width="1.100"><path d="M0 1.500h2M4 1.500h12M0 4.500h2M4 4.500h12M0 7.500h2M4 7.500h12M0 10.500h2M4 10.500h12"/></svg>
<svg class="abs" style="left:38px;top:4px" width="12" height="14" viewBox="0 0 12 14" fill="none" stroke="#a0a0a0" stroke-width="1.200"><path d="M1.500 1h9v12L6 9.500 1.500 13z"/></svg>
<svg class="abs" style="left:67px;top:5px" width="14" height="12" viewBox="0 0 14 12" fill="none" stroke="#c0c0c0" stroke-width="1.200"><path d="M13.500 6H1M6 1L1 6l5 5"/></svg>
<svg class="abs" style="left:96px;top:5px" width="14" height="12" viewBox="0 0 14 12" fill="none" stroke="#4e4e4e" stroke-width="1.200"><path d="M.5 6H13M8 1l5 5-5 5"/></svg>
<svg class="abs" style="left:124px;top:3px" width="18" height="16" viewBox="0 0 18 16"><path d="M4.800 2.500c-2 0-2.300.8-2.300 2.200v1.500c0 1-.5 1.600-1.500 1.800 1 .2 1.500.8 1.500 1.800v1.500c0 1.400.3 2.200 2.300 2.200M13.200 2.500c2 0 2.300.8 2.300 2.200v1.500c0 1 .5 1.600 1.500 1.800-1 .2-1.500.8-1.500 1.800v1.500c0 1.400-.3 2.200-2.300 2.200" fill="none" stroke="#f9c23c" stroke-width="1.400"/><circle cx="6.300" cy="9.500" r=".8" fill="#f9c23c"/><circle cx="9" cy="9.500" r=".8" fill="#f9c23c"/><circle cx="11.700" cy="9.500" r=".8" fill="#f9c23c"/></svg>
<span style="left:147px">app.json</span>
<svg class="abs" style="left:201px;top:6px" width="7" height="10" viewBox="0 0 7 10" fill="none" stroke="#a9a9a9" stroke-width="1.200"><path d="M1 .5L5.500 5 1 9.500"/></svg>
<span style="left:213px;letter-spacing:1px">{}</span>
<span style="left:233px">window</span>
<svg class="abs" style="left:283px;top:6px" width="7" height="10" viewBox="0 0 7 10" fill="none" stroke="#a9a9a9" stroke-width="1.200"><path d="M1 .5L5.500 5 1 9.500"/></svg>
<svg class="abs" style="left:295px;top:5px" width="15" height="11" viewBox="0 0 15 11" fill="none" stroke="#b4b4b4" stroke-width="1.100"><rect x=".6" y=".6" width="13.800" height="9.800" rx="1"/><path d="M3 5h2.200v2H3.600zM7 3.500v3.500h1.500v-2H7M12 5h-1.800v2H12" stroke-width=".8"/></svg>
<span style="left:316px">navigationBarTitleText</span>
</div>
<div id="code" class="abs">
<div class="abs" style="left:1149px;top:0;width:6px;height:606px;background:#2a2a2a"></div><div class="abs" style="left:83px;top:256px;width:1072px;height:32px;background:#424242"></div>
<div class="guide" style="left:83px;top:32px;height:574px"></div>
<div class="guide" style="left:101px;top:64px;height:64px"></div>
<div class="guide" style="left:101px;top:192px;height:144px;background:#b061ad"></div>
<div class="abs" style="left:101px;top:191px;width:95px;height:1px;background:#b061ad"></div>
<div class="guide" style="left:101px;top:384px;height:128px"></div>
<div class="guide" style="left:119px;top:448px;height:32px"></div>
<div class="guide" style="left:101px;top:576px;height:30px"></div>
<div class="abs" style="left:189px;top:160px;width:9px;height:32px;border:1px solid #888;background:rgba(0,100,0,.12)"></div>
<div class="abs" style="left:101px;top:320px;width:9px;height:32px;border:1px solid #888;background:rgba(0,100,0,.12)"></div>
<div class="ln" style="top:0px">1</div>
<svg class="fold" style="top:5px" viewBox="0 0 14 8" fill="none" stroke="#c5c5c5" stroke-width="1.200"><path d="M2 1l5 5 5-5"/></svg>
<div class="cl" style="top:0px"><span class="b1">{</span></div>
<div class="ln" style="top:32px">2</div>
<svg class="fold" style="top:37px" viewBox="0 0 14 8" fill="none" stroke="#c5c5c5" stroke-width="1.200"><path d="M2 1l5 5 5-5"/></svg>
<div class="cl" style="top:32px">  <span class="q">"</span><span class="k1">pages</span><span class="q">"</span>: <span class="b2">[</span></div>
<div class="ln" style="top:64px">3</div>
<div class="cl" style="top:64px">    <span class="q">"</span><span class="s">pages/index/index</span><span class="q">"</span>,</div>
<div class="ln" style="top:96px">4</div>
<div class="cl" style="top:96px">    <span class="q">"</span><span class="s">pages/mine/mine</span><span class="q">"</span></div>
<div class="ln" style="top:128px">5</div>
<div class="cl" style="top:128px">  <span class="b2">]</span>,</div>
<div class="ln" style="top:160px">6</div>
<svg class="fold" style="top:165px" viewBox="0 0 14 8" fill="none" stroke="#c5c5c5" stroke-width="1.200"><path d="M2 1l5 5 5-5"/></svg>
<div class="cl" style="top:160px">  <span class="q">"</span><span class="k1">window</span><span class="q">"</span>: <span class="b2">{</span></div>
<div class="ln" style="top:192px">7</div>
<div class="cl" style="top:192px">    <span class="k2">"backgroundTextStyle"</span>: <span class="q">"</span><span class="s">light</span><span class="q">"</span>,</div>
<div class="ln" style="top:224px">8</div>
<div class="cl" style="top:224px">    <span class="k2">"navigationBarBackgroundColor"</span>: <span class="q">"</span><span class="s">#fff</span><span class="q">"</span>,</div>
<div class="ln" style="top:256px;color:#c6c6c6">9</div>
<div class="cl" style="top:256px">    <span class="k2">"navigationBarTitleText"</span>: <span class="q">"</span><span class="s">ASP300<span style="font-size:16px">源码头像大全</span></span><span class="q">"</span>,</div>
<div class="ln" style="top:288px">10</div>
<div class="cl" style="top:288px">    <span class="k2">"navigationBarTextStyle"</span>: <span class="q">"</span><span class="s">black</span><span class="q">"</span></div>
<div class="ln" style="top:320px">11</div>
<div class="cl" style="top:320px">  <span class="b2">}</span>,</div>
<div class="ln" style="top:352px">12</div>
<svg class="fold" style="top:357px" viewBox="0 0 14 8" fill="none" stroke="#c5c5c5" stroke-width="1.200"><path d="M2 1l5 5 5-5"/></svg>
<div class="cl" style="top:352px">  <span class="q">"</span><span class="k1">subPackages</span><span class="q">"</span>: <span class="b2">[</span><span class="b3">{</span></div>
<div class="ln" style="top:384px">13</div>
<div class="cl" style="top:384px">    <span class="k2">"root"</span>: <span class="q">"</span><span class="s">detailPage</span><span class="q">"</span>,</div>
<div class="ln" style="top:416px">14</div>
<svg class="fold" style="top:421px" viewBox="0 0 14 8" fill="none" stroke="#c5c5c5" stroke-width="1.200"><path d="M2 1l5 5 5-5"/></svg>
<div class="cl" style="top:416px">    <span class="k2">"pages"</span>: <span class="b1">[</span></div>
<div class="ln" style="top:448px">15</div>
<div class="cl" style="top:448px">      <span class="q">"</span><span class="s">pages/detail/detail</span><span class="q">"</span></div>
<div class="ln" style="top:480px">16</div>
<div class="cl" style="top:480px">    <span class="b1">]</span></div>
<div class="ln" style="top:512px">17</div>
<div class="cl" style="top:512px">  <span class="b3">}</span><span class="b2">]</span>,</div>
<div class="ln" style="top:544px">18</div>
<svg class="fold" style="top:549px" viewBox="0 0 14 8" fill="none" stroke="#c5c5c5" stroke-width="1.200"><path d="M2 1l5 5 5-5"/></svg>
<div class="cl" style="top:544px">  <span class="q">"</span><span class="k1">tabBar</span><span class="q">"</span>: <span class="b2">{</span></div>
<div class="ln" style="top:576px">19</div>
<div class="cl" style="top:576px">    <span class="k2">"color"</span>: <span class="q">"</span><span class="s">#000000</span><span class="q">"</span>,</div>
<div class="abs" style="left:1149px;top:0;width:6px;height:204px;background:#555"></div>
<div class="abs" style="left:1149px;top:85px;width:6px;height:2px;background:#8a8a8a"></div>
</div>
<div class="abs" style="left:701px;top:750px;width:1px;height:241px;background:linear-gradient(#3c3c3c 0 1px,#333 1px 30px,#292a2d 30px 56px,#3a3a3a 56px 57px,#242424 57px)"></div>
<div id="dbg" class="abs">
<div id="dbghd">
<div class="t" style="left:19px;color:#f0f0f0">调试器</div>
<div class="abs" style="left:19px;top:28px;width:33px;height:1px;background:#e8e8e8"></div>
<div class="abs" style="left:60px;top:6px;width:18px;height:18px;border-radius:9px;background:#4a4a4a;color:#e8e8e8;font-size:11px;line-height:18px;text-align:center">6</div>
<div class="t" style="left:98px">问题</div>
<div class="t" style="left:140px">输出</div>
<div class="t" style="left:182px">终端</div>
<div class="t" style="left:224px">代码质量</div>
<svg class="abs" style="left:1099px;top:12px" width="12" height="7" viewBox="0 0 12 7" fill="none" stroke="#e0e0e0" stroke-width="1.300"><path d="M1 6l5-5 5 5"/></svg>
<svg class="abs" style="left:1132px;top:11px" width="10" height="10" viewBox="0 0 10 10" stroke="#e0e0e0" stroke-width="1.300"><path d="M.5.5l9 9M9.500.5l-9 9"/></svg>
</div>
<div id="dvtabs"><svg class="abs" style="left:8px;top:6px" width="16" height="15" viewBox="0 0 16 15" fill="none" stroke="#8f8f8f" stroke-width="1.200"><path d="M6 11.500H1.500v-10h11V6"/><path d="M7 6l7.500 3-3.200 1.200 2.500 2.800-1.300 1-2.300-2.900L8.500 13z" fill="#8f8f8f" stroke="none"/></svg><div class="abs" style="left:33px;top:5px;width:1px;height:15px;background:#444"></div><div class="abs" style="left:40px;top:0;width:54px;height:25px;background:#000"></div><div class="t" style="left:52px">Wxml</div><div class="t" style="left:106px">Console</div><div class="t" style="left:171px">Sources</div><div class="t" style="left:237px">Network</div><div class="t" style="left:306px">Performance</div><div class="t" style="left:396px">Memory</div><div class="t" style="left:464px">AppData</div><div class="t" style="left:533px">Storage</div><div class="t" style="left:597px">Security</div><div class="t" style="left:672px">Sensor</div><div class="t" style="left:731px">Mock</div><div class="t" style="left:784px">Audits</div><div class="t" style="left:842px">Vulnerability</div><svg class="abs" style="left:1041px;top:7px" width="12" height="11" viewBox="0 0 12 11"><path d="M6 .5L11.500 10.500H.5z" fill="#f5c518"/><path d="M6 4v3.500M6 8.500v1" stroke="#292929" stroke-width="1.200"/></svg><div class="t" style="left:1055px">6</div><div class="abs" style="left:1073px;top:5px;width:1px;height:15px;background:#444"></div><svg class="abs" style="left:1083px;top:5px" width="15" height="15" viewBox="0 0 16 16"><path d="M8 0l1.200 2.300 2.500-.9.500 2.600 2.600.5-.9 2.500L16 8l-2.100 1 .9 2.500-2.600.5-.5 2.600-2.500-.9L8 16l-1.200-2.300-2.500.9-.5-2.600-2.600-.5.900-2.500L0 8l2.100-1-.9-2.500 2.600-.5.5-2.600 2.500.9z" fill="#b8b8b8"/><circle cx="8" cy="8" r="2.600" fill="#292929"/></svg><svg class="abs" style="left:1117px;top:6px" width="4" height="14" viewBox="0 0 4 14" fill="#b0b0b0"><circle cx="2" cy="2" r="1.300"/><circle cx="2" cy="7" r="1.300"/><circle cx="2" cy="12" r="1.300"/></svg><svg class="abs" style="left:1140px;top:6px" width="15" height="13" viewBox="0 0 15 13" fill="none" stroke="#9a9a9a" stroke-width="1.600"><path d="M4 3V1h11v8h-3"/><rect x="1" y="4" width="10" height="8"/></svg></div>
<div class="el" style="left:12px;top:60px"><span class="p">&lt;page&gt;</span></div>
<div class="el" style="left:25px;top:77px"><i></i><span class="p">&lt;view</span> <span class="a">style</span><span class="p">=</span><span class="g">"</span><span class="v">position: sticky;top: 0px;left: 0px;z-index: 999;background-color: white;</span><span class="g">"</span> <span class="a">class</span><span class="p">=</span><span class="g">"</span><span class="v">warp</span><span class="g">"</span><span class="p">&gt;</span><span class="g">…</span><span class="p">&lt;/view&gt;</span></div>
<div class="el" style="left:25px;top:94px"><i></i><span class="p">&lt;view</span> <span class="a">class</span><span class="p">=</span><span class="g">"</span><span class="v">btn</span><span class="g">"</span><span class="p">&gt;</span><span class="g">…</span><span class="p">&lt;/view&gt;</span></div>
<div class="el" style="left:25px;top:111px"><i></i><span class="p">&lt;view</span> <span class="a">style</span><span class="p">=</span><span class="g">"</span><span class="v">display: flex;justify-content: center;flex-direction: column;</span><span class="g">"</span><span class="p">&gt;</span><span class="g">…</span><span class="p">&lt;/view&gt;</span></div>
<div class="el" style="left:25px;top:128px"><i></i><span class="p">&lt;scroll-view</span> <span class="a">bindscrolltolower</span><span class="p">=</span><span class="g">"</span><span class="v">scrolltolower</span><span class="g">"</span> <span class="a">style</span><span class="p">=</span><span class="g">"</span><span class="v">height: 639px;</span><span class="g">"</span><span class="p">&gt;</span><span class="g">…</span><span class="p">&lt;/scroll-view&gt;</span></div>
<div class="el" style="left:12px;top:145px"><span class="p">&lt;/page&gt;</span></div>
<div id="styles">
<div class="abs" style="left:0;top:0;width:316px;height:28px;background:#292a2d;border-bottom:1px solid #3a3a3a"></div>
<div class="abs" style="left:0;top:0;width:50px;height:27px;background:#000"></div>
<div class="t" style="left:8px">Styles</div>
<div class="t" style="left:59px">Computed</div>
<div class="t" style="left:135px">Dataset</div>
<div class="t" style="left:195px">Component Data</div>
<div class="t" style="left:304px;font-size:14px;color:#aaa">»</div>
<div class="abs" style="left:0;top:28px;width:316px;height:26px;background:#292a2d;border-bottom:1px solid #333"></div>
<div class="abs" style="left:3px;top:31px;width:250px;height:20px;background:#2f2f2f"></div>
<div class="t" style="left:7px;top:29px;height:24px;line-height:24px;color:#9a9a9a">Filter</div>
<div class="t" style="left:263px;top:30px;height:24px;line-height:22px;font-family:'DejaVu Sans Mono','Liberation Mono',monospace;font-weight:bold;font-size:11px;color:#d8d8d8">.cls</div>
<svg class="abs" style="left:303px;top:36px" width="11" height="11" viewBox="0 0 11 11" stroke="#7a7a7a" stroke-width="1.200"><path d="M5.500 0v11M0 5.500h11"/></svg>
</div>
</div>
</body>
</html>
